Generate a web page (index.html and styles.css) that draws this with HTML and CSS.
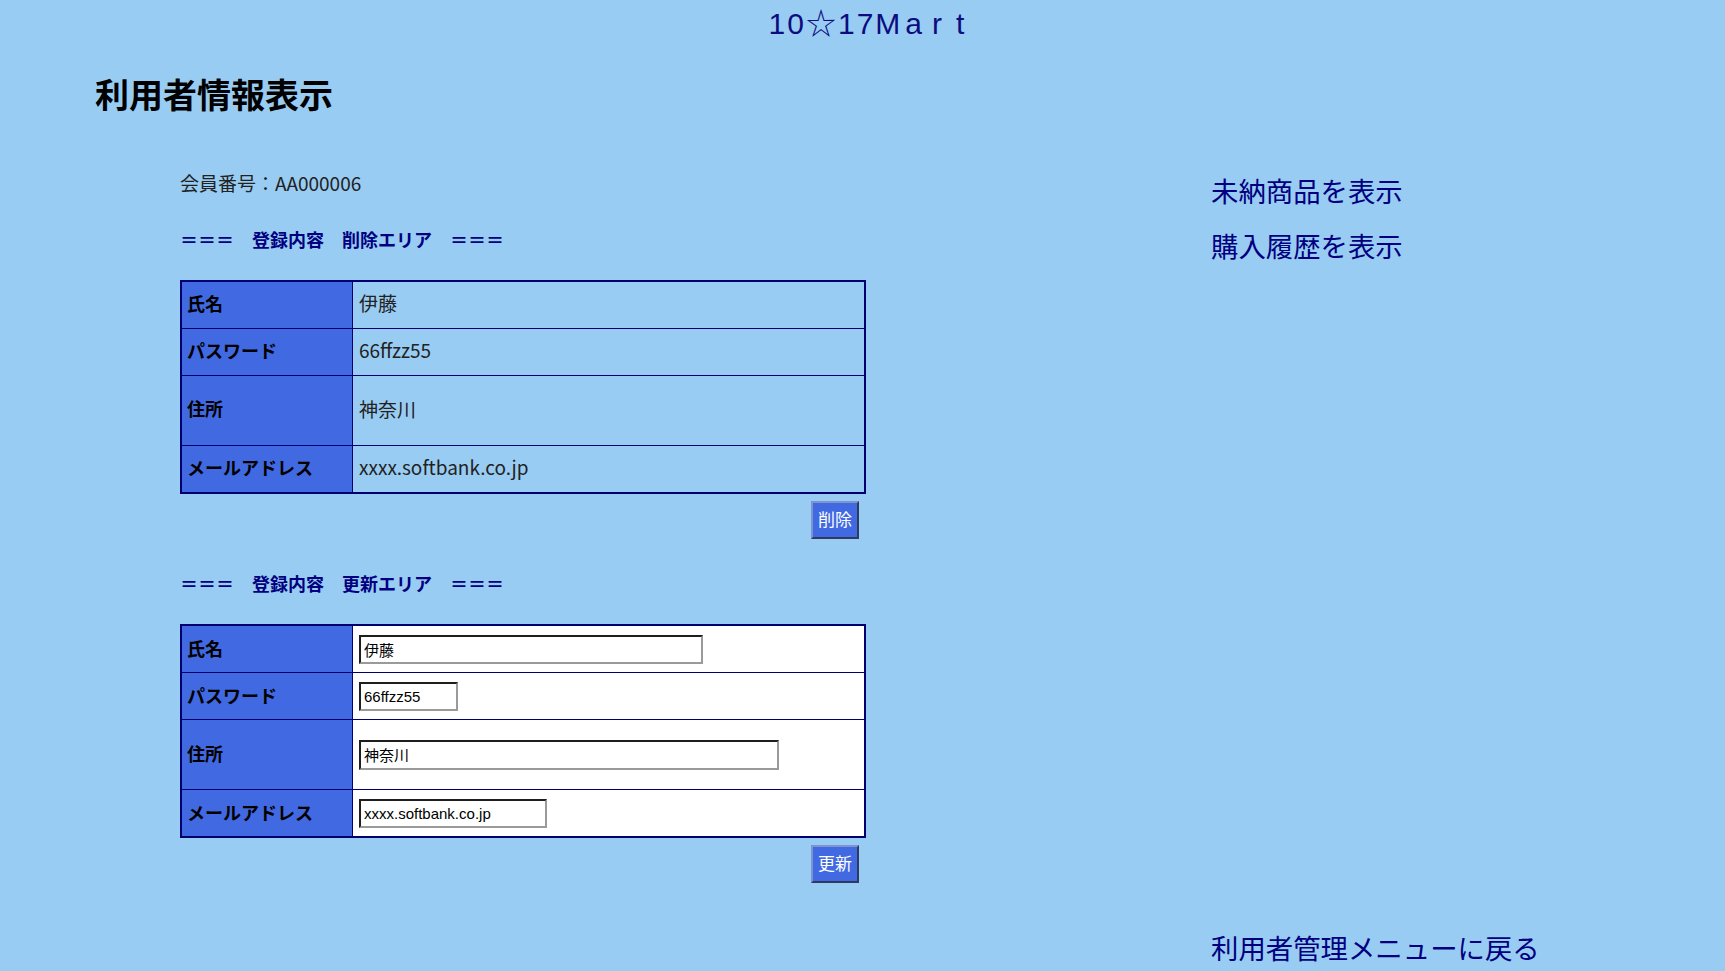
FILE: index.html
```html
<!DOCTYPE html>
<html lang="ja">
<head>
<meta charset="utf-8">
<title>利用者情報表示</title>
<link rel="stylesheet" href="styles.css">
</head>
<body>
<header class="site-title">10☆17<span class="ls-m">M</span><span class="ls-a">a</span><span class="ls-r">r</span>t</header>
<h1 class="page-title">利用者情報表示</h1>
<div class="content">
  <main class="main">
    <p class="member">会員番号：AA000006</p>

    <section class="area">
      <h2 class="section-title">＝＝＝　登録内容　削除エリア　＝＝＝</h2>
      <form class="form">
        <table class="info">
          <tr><th>氏名</th><td>伊藤</td></tr>
          <tr><th>パスワード</th><td>66ffzz55</td></tr>
          <tr class="tall"><th>住所</th><td>神奈川</td></tr>
          <tr><th>メールアドレス</th><td>xxxx.softbank.co.jp</td></tr>
        </table>
        <div class="actions"><button type="button" class="btn">削除</button></div>
      </form>
    </section>

    <section class="area">
      <h2 class="section-title">＝＝＝　登録内容　更新エリア　＝＝＝</h2>
      <form class="form">
        <table class="info edit">
          <tr><th>氏名</th><td><input class="field w-name" type="text" value="伊藤"></td></tr>
          <tr><th>パスワード</th><td><input class="field w-pass" type="text" value="66ffzz55"></td></tr>
          <tr class="tall"><th>住所</th><td><input class="field w-addr" type="text" value="神奈川"></td></tr>
          <tr><th>メールアドレス</th><td><input class="field w-mail" type="text" value="xxxx.softbank.co.jp"></td></tr>
        </table>
        <div class="actions"><button type="button" class="btn">更新</button></div>
      </form>
    </section>
  </main>

  <aside class="side">
    <a class="side-link" href="#">未納商品を表示</a>
    <a class="side-link" href="#">購入履歴を表示</a>
  </aside>
</div>
<footer class="back">
  <a class="side-link" href="#">利用者管理メニューに戻る</a>
</footer>
</body>
</html>
```
FILE: styles.css
```css
html, body {
  margin: 0;
  padding: 0;
}

body {
  background: #99ccf2;
  font-family: "Noto Sans CJK JP", sans-serif;
  color: #222;
}

.site-title {
  height: 48px;
  padding-left: 10px;
  text-align: center;
  font-family: "Liberation Sans", "Noto Sans CJK JP", sans-serif;
  font-size: 30px;
  line-height: 48px;
  letter-spacing: 2px;
  color: #0c0c80;
}

.ls-m { letter-spacing: 5px; }
.ls-a { letter-spacing: 10px; }
.ls-r { letter-spacing: 14px; }

.page-title {
  margin: 25px 0 0 95px;
  font-size: 34px;
  line-height: 41px;
  font-weight: bold;
  color: #000;
}

.content {
  display: flex;
  padding-left: 180px;
}

.main {
  width: 686px;
}

.member {
  margin: 55px 0 0;
  font-size: 19px;
  line-height: 28px;
  color: #222;
}

.section-title {
  margin: 29px 0 0;
  font-size: 18px;
  line-height: 26px;
  font-weight: bold;
  color: #000080;
}

.area + .area .section-title {
  margin-top: 31px;
}

.form {
  margin: 28px 0 0;
}

.info {
  width: 686px;
  border-collapse: collapse;
  border: 2px solid #00006e;
}

.info th,
.info td {
  height: 41px;
  padding: 0 6px 5px;
  border: 1px solid #00006e;
  text-align: left;
  vertical-align: middle;
}

.info th {
  width: 159px;
  padding-left: 5px;
  background: #4169e1;
  font-size: 18px;
  font-weight: bold;
  color: #000;
}

.info td {
  font-size: 19px;
  color: #222;
}

.info .tall th,
.info .tall td {
  height: 64px;
}

.edit th {
  height: 43px;
  padding-bottom: 3px;
}

.edit .tall th {
  height: 66px;
}

.edit td {
  height: 46px;
  padding-bottom: 0;
  background: #fff;
}

.edit .tall td {
  height: 69px;
}

.field {
  display: block;
  box-sizing: border-box;
  height: 29px;
  margin: 0;
  padding: 0 3px;
  border: 2px solid;
  border-color: #1e1e1e #9a9a9a #9a9a9a #1e1e1e;
  background: #fff;
  font-family: "Liberation Sans", "Noto Sans CJK JP", sans-serif;
  font-size: 15px;
  color: #000;
}

.w-name { width: 344px; }
.w-pass { width: 99px; }
.w-addr { width: 420px; height: 30px; }
.w-mail { width: 188px; }

.actions {
  display: flex;
  justify-content: flex-end;
  margin-top: 7px;
  padding-right: 7px;
}

.btn {
  width: 48px;
  height: 38px;
  padding: 0 0 4px;
  border: 2px solid;
  border-color: #7f93cf #2e3a5e #2e3a5e #7f93cf;
  background: #4169e1;
  color: #fff;
  font-family: "Noto Sans CJK JP", sans-serif;
  font-size: 17px;
}

.side {
  margin-left: 345px;
  padding-top: 49px;
}

.side-link {
  display: block;
  font-size: 27.4px;
  line-height: 55px;
  color: #000080;
  text-decoration: none;
  white-space: nowrap;
}

.back {
  margin-top: 45px;
  padding-left: 1211px;
}

.back .side-link {
  line-height: 38px;
}
```
